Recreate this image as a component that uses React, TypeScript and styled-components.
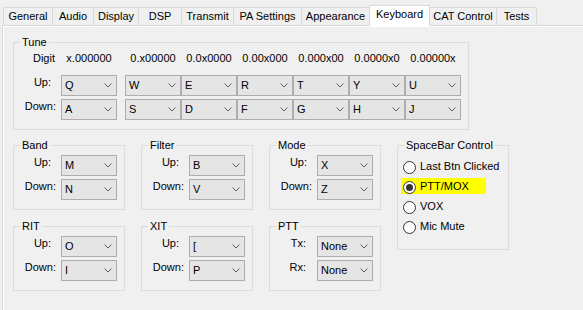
import styled, { createGlobalStyle } from 'styled-components'

const GlobalStyle = createGlobalStyle`
  html, body { margin: 0; padding: 0; background: #f0f0f0; }
  body { font-family: "Liberation Sans", Arial, sans-serif; }
`

const TABS: [string, number][] = [
  ['General', 50],
  ['Audio', 42],
  ['Display', 46],
  ['DSP', 44],
  ['Transmit', 53],
  ['PA Settings', 69],
  ['Appearance', 69],
  ['Keyboard', 61],
  ['CAT Control', 68],
  ['Tests', 41],
]

const DIGITS = ['x.000000', '0.x00000', '0.0x0000', '0.00x000', '0.000x00', '0.0000x0', '0.00000x']
const TUNE_UP = ['Q', 'W', 'E', 'R', 'T', 'Y', 'U']
const TUNE_DOWN = ['A', 'S', 'D', 'F', 'G', 'H', 'J']

const Window = styled.div`
  width: 583px;
  height: 310px;
  overflow: hidden;
  background: #f0f0f0;
  font-family: "Liberation Sans", Arial, sans-serif;
  font-size: 11px;
  color: #000;
  display: flex;
  flex-direction: column;
`

const TabStrip = styled.div`
  display: flex;
  align-items: flex-start;
  height: 25px;
  padding-left: 3px;
  box-sizing: border-box;
  position: relative;
  z-index: 1;
`

const Tab = styled.div<{ $w: number; $active?: boolean }>`
  box-sizing: border-box;
  width: ${p => p.$w}px;
  height: ${p => (p.$active ? 21 : 18)}px;
  margin-top: ${p => (p.$active ? 5 : 7)}px;
  margin-left: -1px;
  &:first-child { margin-left: 0; }
  border: 1px solid #d9d9d9;
  border-bottom: none;
  background: ${p => (p.$active ? '#fff' : '#f0f0f0')};
  position: relative;
  z-index: ${p => (p.$active ? 1 : 0)};
  text-align: center;
  line-height: 17px;
  white-space: nowrap;
`

const Page = styled.div`
  flex: 1;
  margin-left: 2px;
  border-top: 1px solid #d9d9d9;
  border-left: 1px solid #d9d9d9;
  box-shadow: inset 1px 1px 0 #fff;
  padding: 9px 0 0 10px;
`

const Group = styled.fieldset<{ $w: number; $h?: number; $tall?: boolean }>`
  margin: 0;
  padding: 0;
  min-width: 0;
  box-sizing: border-box;
  width: ${p => p.$w}px;
  ${p => (p.$h ? `height: ${p.$h}px;` : '')}
  ${p => (p.$tall ? 'grid-column: 4; grid-row: 1 / span 2;' : '')}
  border: 1px solid #dcdcdc;
`

const Caption = styled.legend`
  margin-left: 6px;
  padding: 0 2px;
  line-height: 14px;
  font-size: 11px;
`

const TuneGrid = styled.div`
  display: grid;
  grid-template-columns: 47px 64px repeat(6, 56px);
  grid-template-rows: repeat(3, 21px);
  row-gap: 3px;
  padding: 2px 0 9px;
  align-items: start;
`

const GroupGrid = styled.div`
  display: grid;
  grid-template-columns: repeat(4, 112px);
  column-gap: 16px;
  row-gap: 9px;
  margin-top: 8px;
  align-items: start;
`

const FieldRows = styled.div`
  display: grid;
  grid-template-columns: 47px 56px;
  grid-auto-rows: 21px;
  row-gap: 3px;
  padding: 3px 0 9px;
  align-items: start;
`

const FieldLabel = styled.span<{ $pad?: number }>`
  text-align: right;
  padding-right: ${p => p.$pad ?? 5}px;
  line-height: 14px;
  white-space: nowrap;
`

const DigitText = styled.span`
  width: 56px;
  text-align: center;
  line-height: 14px;
  white-space: nowrap;
`

const ComboBox = styled.div`
  box-sizing: border-box;
  width: 56px;
  height: 21px;
  border: 1px solid #adadad;
  background: #e5e5e5;
  display: flex;
  align-items: center;
  justify-content: space-between;
  padding: 0 4px 0 3px;
  line-height: 19px;
`

const Chevron = styled.svg`
  width: 8px;
  height: 5px;
  flex: none;
`

const RadioList = styled.div`
  display: flex;
  flex-direction: column;
  align-items: flex-start;
  gap: 4px;
  padding: 6px 0 0 3px;
`

const RadioRow = styled.label<{ $hl?: boolean }>`
  display: flex;
  align-items: flex-end;
  gap: 4px;
  height: 16px;
  box-sizing: border-box;
  padding-left: 2px;
  ${p => (p.$hl ? 'width: 85px;' : '')}
  background: ${p => (p.$hl ? '#ffff00' : 'transparent')};
  line-height: 16px;
  white-space: nowrap;
`

const RadioDot = styled.span<{ $on?: boolean }>`
  width: 13px;
  height: 13px;
  box-sizing: border-box;
  border: 1px solid #333;
  border-radius: 50%;
  background: #fff;
  display: grid;
  place-items: center;
  &::after {
    content: '';
    width: 7px;
    height: 7px;
    border-radius: 50%;
    background: ${p => (p.$on ? '#333' : 'transparent')};
  }
`

function Combo({ value }: { value: string }) {
  return (
    <ComboBox>
      <span>{value}</span>
      <Chevron viewBox="0 0 8 5">
        <polyline points="0.5,0.5 4,4 7.5,0.5" fill="none" stroke="#606060" strokeWidth="1" />
      </Chevron>
    </ComboBox>
  )
}

function UpDownGroup({ title, up, down, labels = ['Up:', 'Down:'], pads = [10, 5] }: {
  title: string
  up: string
  down: string
  labels?: string[]
  pads?: number[]
}) {
  return (
    <Group $w={112}>
      <Caption>{title}</Caption>
      <FieldRows>
        <FieldLabel $pad={pads[0]}>{labels[0]}</FieldLabel>
        <Combo value={up} />
        <FieldLabel $pad={pads[1]}>{labels[1]}</FieldLabel>
        <Combo value={down} />
      </FieldRows>
    </Group>
  )
}

const SPACEBAR = ['Last Btn Clicked', 'PTT/MOX', 'VOX', 'Mic Mute']

export default function App() {
  return (
    <Window>
      <GlobalStyle />
      <TabStrip>
        {TABS.map(([name, w]) => (
          <Tab key={name} $w={w} $active={name === 'Keyboard'}>{name}</Tab>
        ))}
      </TabStrip>
      <Page>
        <Group $w={456}>
          <Caption>Tune</Caption>
          <TuneGrid>
            <FieldLabel $pad={6}>Digit</FieldLabel>
            {DIGITS.map(d => <DigitText key={d}>{d}</DigitText>)}
            <FieldLabel $pad={10}>Up:</FieldLabel>
            {TUNE_UP.map(k => <Combo key={k} value={k} />)}
            <FieldLabel>Down:</FieldLabel>
            {TUNE_DOWN.map(k => <Combo key={k} value={k} />)}
          </TuneGrid>
        </Group>

        <GroupGrid>
          <UpDownGroup title="Band" up="M" down="N" />
          <UpDownGroup title="Filter" up="B" down="V" />
          <UpDownGroup title="Mode" up="X" down="Z" />
          <Group $w={112} $h={112} $tall>
            <Caption>SpaceBar Control</Caption>
            <RadioList>
              {SPACEBAR.map(s => (
                <RadioRow key={s} $hl={s === 'PTT/MOX'}>
                  <RadioDot $on={s === 'PTT/MOX'} />
                  <span>{s}</span>
                </RadioRow>
              ))}
            </RadioList>
          </Group>
          <UpDownGroup title="RIT" up="O" down="I" />
          <UpDownGroup title="XIT" up="[" down="P" />
          <UpDownGroup title="PTT" up="None" down="None" labels={['Tx:', 'Rx:']} pads={[11, 11]} />
        </GroupGrid>
      </Page>
    </Window>
  )
}
